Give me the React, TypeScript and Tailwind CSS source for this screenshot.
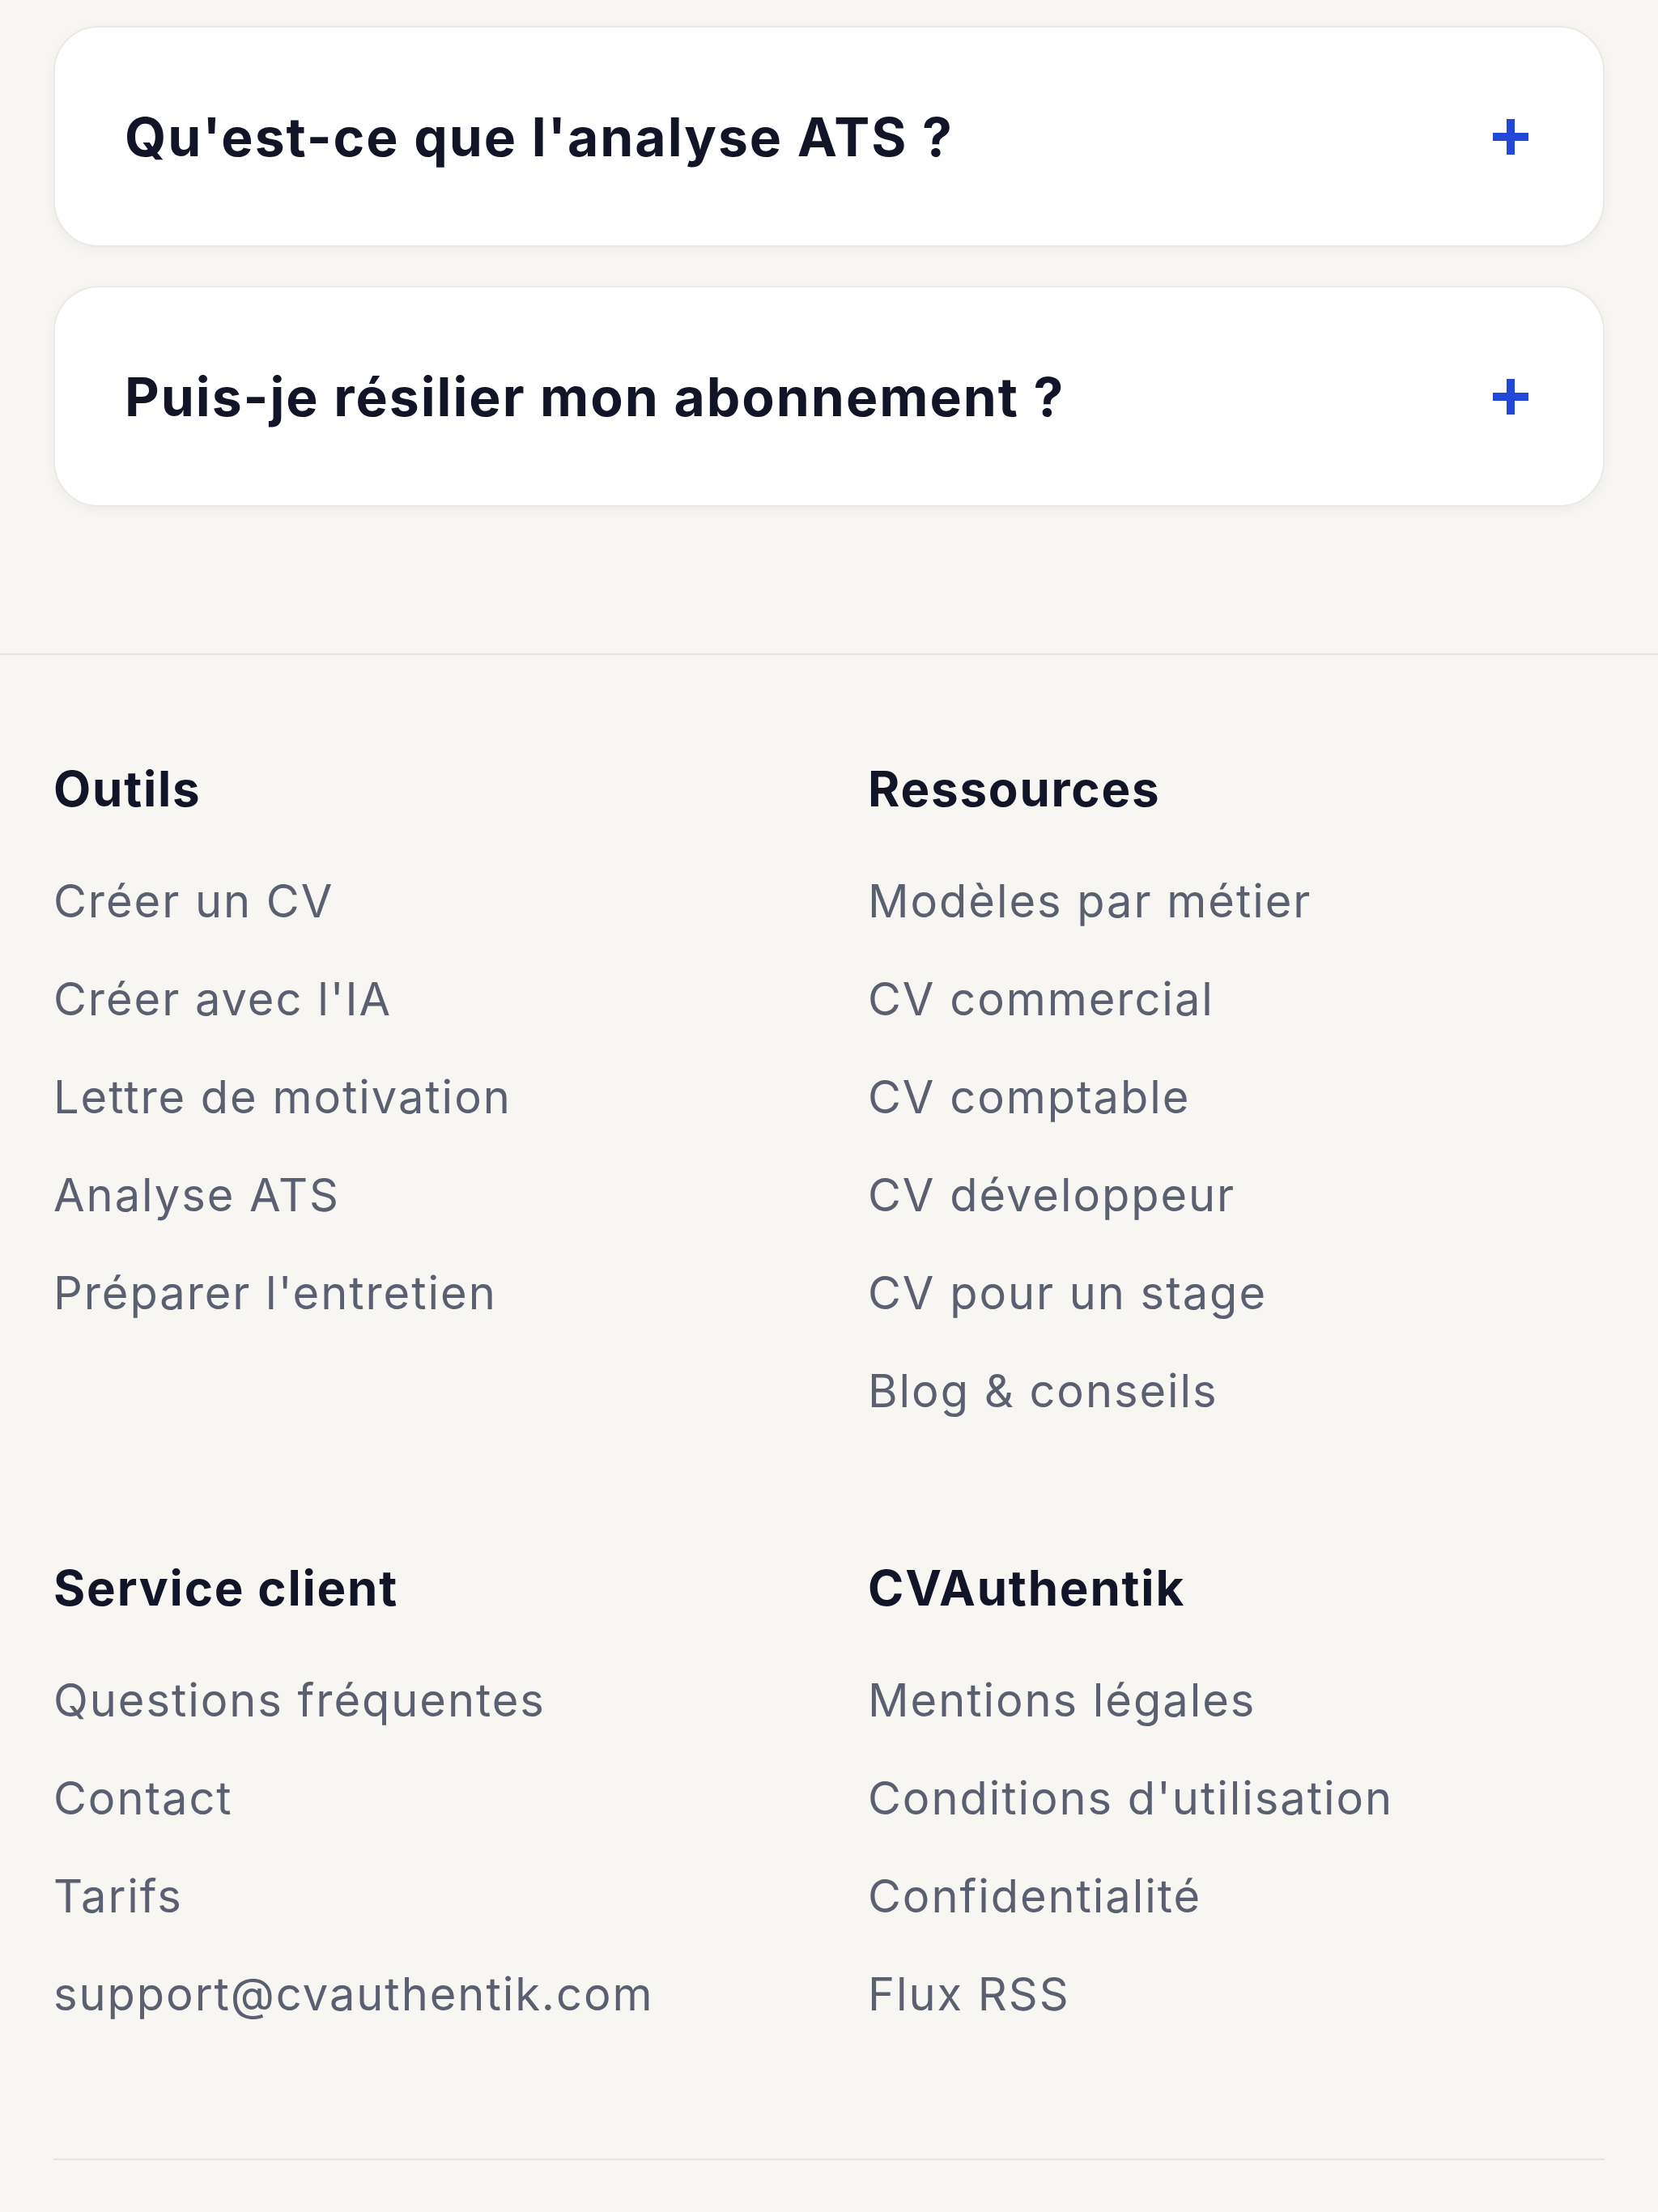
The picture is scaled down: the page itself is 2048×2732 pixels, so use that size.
import React from "react";

const faqs = ["Qu'est-ce que l'analyse ATS ?", "Puis-je résilier mon abonnement ?"];

const sections: { title: string; links: string[] }[] = [
  {
    title: "Outils",
    links: ["Créer un CV", "Créer avec l'IA", "Lettre de motivation", "Analyse ATS", "Préparer l'entretien"],
  },
  {
    title: "Ressources",
    links: ["Modèles par métier", "CV commercial", "CV comptable", "CV développeur", "CV pour un stage", "Blog & conseils"],
  },
  {
    title: "Service client",
    links: ["Questions fréquentes", "Contact", "Tarifs", "support@cvauthentik.com"],
  },
  {
    title: "CVAuthentik",
    links: ["Mentions légales", "Conditions d'utilisation", "Confidentialité", "Flux RSS"],
  },
];

function PlusIcon() {
  return (
    <svg width="44" height="44" viewBox="0 0 44 44" aria-hidden="true">
      <rect x="17" y="0" width="10" height="44" fill="#2148d8" />
      <rect x="0" y="17" width="44" height="10" fill="#2148d8" />
    </svg>
  );
}

export default function App() {
  return (
    <div className="min-h-screen bg-[#f7f6f3] font-['Inter',sans-serif] overflow-hidden">
      <div className="px-[66px] pt-[32px] flex flex-col gap-[48px]">
        {faqs.map((q) => (
          <div
            key={q}
            className="h-[273px] rounded-[56px] bg-white border-2 border-[#ebe9e4] shadow-[0_4px_16px_rgba(0,0,0,0.04)] flex items-center justify-between pl-[86px] pr-[92px]"
          >
            <span className="text-[66px] font-bold leading-none tracking-[0.03em] text-[#121527]">{q}</span>
            <PlusIcon />
          </div>
        ))}
      </div>

      <footer className="mt-[181px] border-t-2 border-[#e7e5e0]">
        <div className="px-[66px] pt-[123px]">
          <div className="grid grid-cols-2 gap-x-[96px] gap-y-[160px]">
            {sections.map((s) => (
              <div key={s.title} className="flex flex-col">
                <h3 className="text-[60px] leading-[84px] font-bold tracking-[0.03em] text-[#121527]">{s.title}</h3>
                <ul className="mt-[57px] flex flex-col gap-[40px]">
                  {s.links.map((l) => (
                    <li key={l} className="text-[56px] leading-[81px] tracking-[0.035em] text-[#5a6070]">
                      {l}
                    </li>
                  ))}
                </ul>
              </div>
            ))}
          </div>
          <div className="mt-[162px] border-t-2 border-[#e7e5e0] h-[200px]" />
        </div>
      </footer>
    </div>
  );
}
